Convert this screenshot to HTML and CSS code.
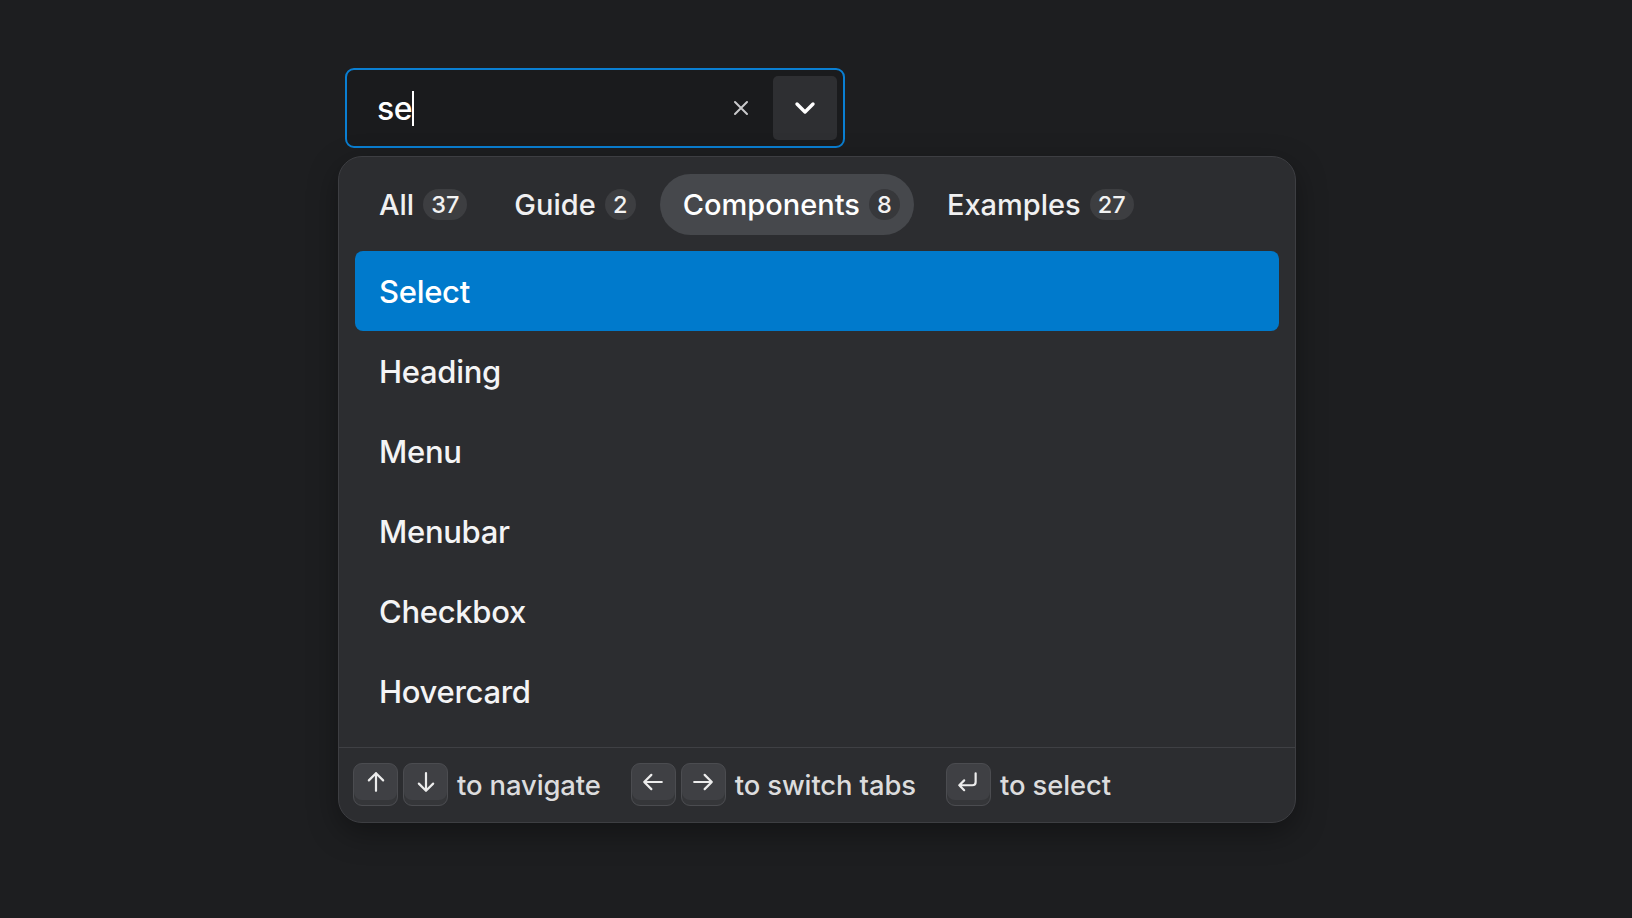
FILE: index.html
```html
<!DOCTYPE html>
<html lang="en">
<head>
<meta charset="utf-8">
<title>Combobox with tabs</title>
<link rel="stylesheet" href="styles.css">
</head>
<body>
<div class="stage">
  <div class="combobox">
    <div class="value">se<span class="caret"></span></div>
    <span class="clear" aria-label="Clear">
      <svg width="16" height="16" viewBox="0 0 16 16"><path d="M2 2 L14 14 M14 2 L2 14" stroke="#c9c9cb" stroke-width="2" stroke-linecap="round"/></svg>
    </span>
    <span class="toggle" aria-label="Show options">
      <svg width="22" height="14" viewBox="0 0 22 14"><path d="M3 3 L11 11 L19 3" fill="none" stroke="#ffffff" stroke-width="3.4" stroke-linecap="round" stroke-linejoin="round"/></svg>
    </span>
  </div>
  <div class="popover">
    <div class="tabs">
      <div class="tab">All <span class="badge">37</span></div>
      <div class="tab">Guide <span class="badge">2</span></div>
      <div class="tab active">Components <span class="badge">8</span></div>
      <div class="tab">Examples <span class="badge">27</span></div>
    </div>
    <div class="list">
      <div class="item selected">Select</div>
      <div class="item">Heading</div>
      <div class="item">Menu</div>
      <div class="item">Menubar</div>
      <div class="item">Checkbox</div>
      <div class="item">Hovercard</div>
    </div>
    <div class="footer">
      <span class="kbd"><svg width="22" height="22" viewBox="0 0 20 20"><path d="M10 2 V18 M3.5 8.5 L10 2 L16.5 8.5" fill="none" stroke="#ececec" stroke-width="2" stroke-linecap="round" stroke-linejoin="round"/></svg></span>
      <span class="kbd"><svg width="22" height="22" viewBox="0 0 20 20"><path d="M10 2 V18 M3.5 11.5 L10 18 L16.5 11.5" fill="none" stroke="#ececec" stroke-width="2" stroke-linecap="round" stroke-linejoin="round"/></svg></span>
      <span class="hint">to navigate</span>
      <span class="kbd first"><svg width="22" height="22" viewBox="0 0 20 20"><path d="M2 10 H18 M8.5 3.5 L2 10 L8.5 16.5" fill="none" stroke="#ececec" stroke-width="2" stroke-linecap="round" stroke-linejoin="round"/></svg></span>
      <span class="kbd"><svg width="22" height="22" viewBox="0 0 20 20"><path d="M2 10 H18 M11.5 3.5 L18 10 L11.5 16.5" fill="none" stroke="#ececec" stroke-width="2" stroke-linecap="round" stroke-linejoin="round"/></svg></span>
      <span class="hint">to switch tabs</span>
      <span class="kbd first"><svg width="24" height="22" viewBox="0 0 22 20"><path d="M18 2 V10 Q18 13 15 13 H3 M7.5 8.5 L3 13 L7.5 17.5" fill="none" stroke="#ececec" stroke-width="2" stroke-linecap="round" stroke-linejoin="round"/></svg></span>
      <span class="hint">to select</span>
    </div>
  </div>
</div>
</body>
</html>
```

FILE: styles.css
```css
* { box-sizing: border-box; }

html, body {
  margin: 0;
  height: 100%;
}

body {
  background: #1d1e20;
  font-family: Inter, "Noto Sans", "Liberation Sans", sans-serif;
  color: #f2f2f3;
}

.stage {
  display: flex;
  flex-direction: column;
  align-items: flex-start;
  padding: 68px 0 0 338px;
}

.combobox {
  margin-left: 7px;
  width: 500px;
  height: 80px;
  border: 2px solid #0a7fd2;
  border-radius: 9px;
  background: #1a1b1d;
  display: flex;
  align-items: center;
  padding: 6px 6px 6px 30px;
}

.value {
  flex: 1;
  display: flex;
  align-items: center;
  font-size: 32px;
  font-weight: 500;
  color: #ffffff;
  letter-spacing: -0.4px;
}

.caret {
  display: inline-block;
  width: 2px;
  height: 35px;
  background: #ffffff;
  margin-left: 0;
}

.clear {
  display: flex;
  margin-right: 24px;
}

.toggle {
  width: 64px;
  height: 64px;
  border-radius: 5px;
  background: #2e2f32;
  display: flex;
  align-items: center;
  justify-content: center;
}

.popover {
  margin-top: 8px;
  width: 958px;
  border: 1px solid #3d3e42;
  border-radius: 24px;
  background: #2c2d30;
  box-shadow: 0 10px 30px rgba(0, 0, 0, 0.35);
  padding: 17px 16px 0 16px;
}

.tabs {
  display: flex;
  gap: 10px;
  padding-left: 1px;
}

.tab {
  height: 61px;
  border-radius: 31px;
  padding: 0 14px 0 23px;
  display: flex;
  align-items: center;
  gap: 9px;
  font-size: 29px;
  font-weight: 500;
  color: #f0f0f1;
  letter-spacing: 0;
}

.tab.active {
  background: #46484c;
  color: #ffffff;
}

.badge {
  min-width: 31px;
  height: 31px;
  padding: 0 8px;
  border-radius: 16px;
  background: #3d3e41;
  display: flex;
  align-items: center;
  justify-content: center;
  font-size: 23.5px;
  font-weight: 500;
  color: #f2f2f2;
}

.tab.active .badge {
  background: #37383b;
}

.list {
  margin-top: 16px;
  padding-bottom: 16px;
  display: flex;
  flex-direction: column;
}

.item {
  height: 80px;
  border-radius: 8px;
  padding-left: 24px;
  display: flex;
  align-items: center;
  font-size: 31px;
  font-weight: 500;
  color: #f4f4f5;
  letter-spacing: -0.3px;
}

.item.selected {
  background: #007acc;
  color: #ffffff;
}

.footer {
  margin: 0 -16px;
  border-top: 1px solid #3f4044;
  padding: 15px 14px 16px 14px;
  display: flex;
  align-items: center;
  gap: 5px;
}

.kbd {
  width: 45px;
  height: 43px;
  border-radius: 9px;
  background: #3f4044;
  border: 1px solid #4b4c50;
  box-shadow: inset 0 -5px 0 #353639;
  display: flex;
  align-items: center;
  justify-content: center;
  padding-bottom: 5px;
}

.kbd.first {
  margin-left: 25px;
}

.hint {
  margin-left: 4px;
  font-size: 27.4px;
  font-weight: 500;
  color: #dcdcdd;
  letter-spacing: -0.1px;
}
```
